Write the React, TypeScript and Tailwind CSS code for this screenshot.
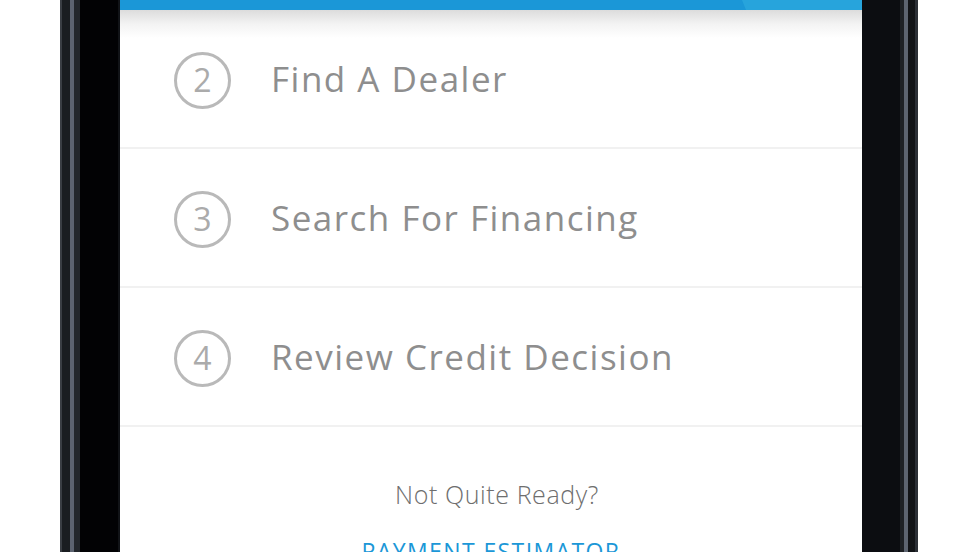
import React from 'react';

const steps = [
  { n: 2, label: 'Find A Dealer' },
  { n: 3, label: 'Search For Financing' },
  { n: 4, label: 'Review Credit Decision' },
];

const StepRow: React.FC<{ n: number; label: string }> = ({ n, label }) => (
  <div className="h-[139px] shrink-0 border-b-2 border-[#f1f1f1] flex items-center pt-[4px] pl-[54px]">
    <div className="w-[57px] h-[57px] rounded-full border-[3px] border-[#b9b9b9] flex items-center justify-center shrink-0">
      <span className="text-[32px] leading-none text-[#ababab] -mt-[1px]">{n}</span>
    </div>
    <span className="ml-[40px] text-[35px] leading-none tracking-[1.5px] text-[#8e8e8e] -mt-[4px]">{label}</span>
  </div>
);

export default function App() {
  return (
    <div
      className="w-[980px] h-[552px] bg-white overflow-hidden flex"
      style={{ fontFamily: '"Open Sans", "Noto Sans", sans-serif' }}
    >
      <div className="ml-[60px] w-[858px] h-full flex">
        {/* left bezel */}
        <div className="w-[60px] h-full flex">
          <div className="w-[2px] bg-[#3a3e44]" />
          <div className="w-[8px] bg-[#1a1d21]" />
          <div className="w-[4px] bg-[#5c6370]" />
          <div className="w-[6px] bg-[#23272c]" />
          <div className="flex-1 bg-[#020204]" />
          <div className="w-[2px] bg-[#111317]" />
        </div>

        {/* screen */}
        <div className="w-[742px] h-full bg-white flex flex-col relative overflow-hidden">
          <div className="h-[10px] bg-[#1b97d7] relative overflow-hidden shrink-0">
            <div className="absolute top-0 bottom-0 left-[622px] right-0 bg-[#27a4dc] [clip-path:polygon(0_0,100%_0,100%_100%,4px_100%)]" />
          </div>
          <div className="absolute top-[10px] left-0 right-0 h-[28px] bg-gradient-to-b from-[#dcdcdc] via-[#f3f3f3] to-white/0 pointer-events-none" />

          {steps.map((s) => (
            <StepRow key={s.n} n={s.n} label={s.label} />
          ))}

          <div className="flex flex-col items-center pt-[55px] shrink-0">
            <span className="text-[25px] font-light leading-none tracking-[0.6px] text-[#6e6e6e] ml-[12px]">Not Quite Ready?</span>
            <span className="mt-[33px] text-[23px] leading-none text-[#1b97d7] tracking-[1.4px]">PAYMENT ESTIMATOR</span>
          </div>
        </div>

        {/* right bezel */}
        <div className="w-[56px] h-full flex">
          <div className="w-[38px] bg-[#0c0d11]" />
          <div className="w-[4px] bg-[#1e2125]" />
          <div className="w-[4px] bg-[#5d6470]" />
          <div className="w-[7px] bg-[#121417]" />
          <div className="w-[3px] bg-[#2c3036]" />
        </div>
      </div>
    </div>
  );
}
